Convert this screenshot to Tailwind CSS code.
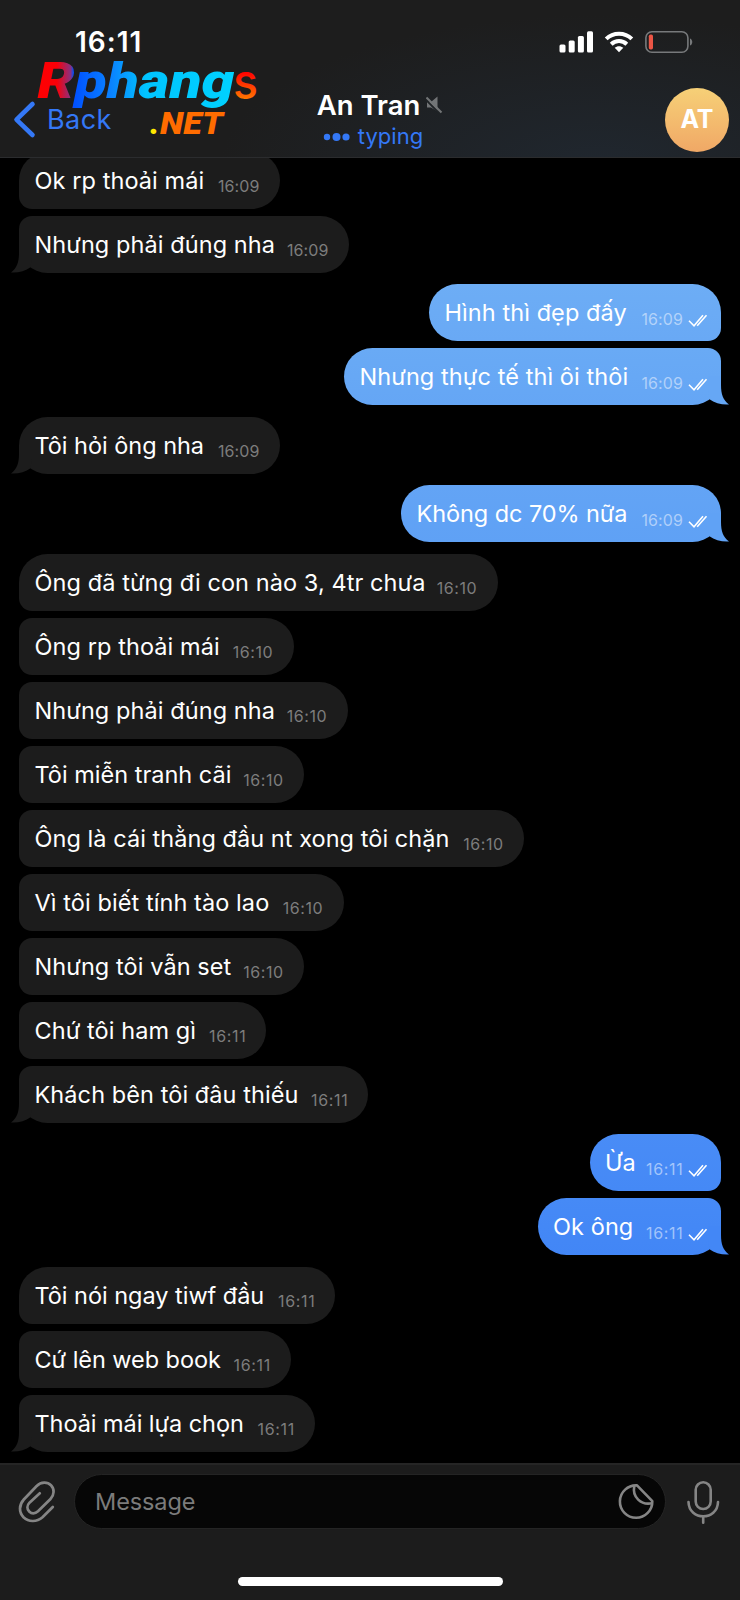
<!DOCTYPE html>
<html lang="vi">
<head>
<meta charset="utf-8">
<title>An Tran</title>
<script src="https://cdn.jsdelivr.net/npm/@tailwindcss/browser@4"></script>
</head>
<body class="bg-black">
<svg class="hidden">
  <symbol id="tail-in" viewBox="0 0 21 29"><path d="M8 0V9C8 18 6 24 0 28.500C7 29 14.500 27 19.500 23.200L21 14V0Z"/></symbol>
  <symbol id="tail-out" viewBox="0 0 21 29"><path d="M13 0V9C13 18 15 24 21 28.500C14 29 6.500 27 1.500 23.200L0 14V0Z"/></symbol>
  <symbol id="ticks" viewBox="0 0 20 14"><path d="M1 6.700L6 11.700L15 1.200M9.200 11.700L18.500 1.200" fill="none" stroke="#fff" stroke-width="1.600"/></symbol>
</svg>
<div class="relative flex h-[1600px] w-[740px] flex-col overflow-hidden bg-black font-['Inter','Noto_Sans',sans-serif] text-white">

  <!-- Header -->
  <header class="relative z-10 flex h-[158px] shrink-0 flex-col border-b border-[#2b2c2e] bg-[#1d1d1d] bg-[radial-gradient(ellipse_380px_150px_at_600px_165px,#20272f,#1d1d1d00)]">
    <div class="flex h-[84px] shrink-0 items-center justify-between pl-[75px] pr-[47px]">
      <div class="text-[28px] leading-[34px] font-semibold tracking-[1px]">16:11</div>
      <div class="flex items-center gap-[11px]">
        <svg class="h-[22px] w-[34px]" viewBox="0 0 34 22" fill="#fff"><rect x="0.500" y="13.500" width="6" height="8" rx="1.500"/><rect x="9.700" y="9.500" width="6" height="12" rx="1.500"/><rect x="18.900" y="5" width="6" height="16.500" rx="1.500"/><rect x="28" y="0.300" width="6" height="21.200" rx="1.500"/></svg>
        <svg class="h-[22px] w-[30px]" viewBox="0 0 30 22" fill="none" stroke="#fff" stroke-width="4"><path d="M2.200 7.800C9.200 0.900 20.800 0.900 27.800 7.800"/><path d="M7.200 13.200C11.600 9 18.400 9 22.800 13.200"/><path d="M10.700 16.800C13.100 14.700 16.900 14.700 19.300 16.800L15 21.200Z" fill="#fff" stroke="none"/></svg>
        <svg class="h-[22px] w-[48px]" viewBox="0 0 48 22"><rect x="0.900" y="0.800" width="42" height="20.400" rx="6" fill="none" stroke="#77797b" stroke-width="1.600"/><rect x="3.800" y="3.500" width="4.200" height="15" rx="1.700" fill="#eb5545"/><path d="M45 7.500C48 8.500 48 13.500 45 14.500Z" fill="#77797b"/></svg>
      </div>
    </div>
    <div class="grid h-[73px] grid-cols-[240px_1fr_240px]">
      <div class="flex items-start gap-[11px] pl-[13px] pt-[15px]">
        <svg class="mt-[1px] h-[40px] w-[23px]" viewBox="0 0 23 40" fill="none" stroke="#3478f6" stroke-width="4.600" stroke-linecap="round" stroke-linejoin="round"><path d="M19.500 4L3.500 19.700L19.500 35"/></svg>
        <span class="mt-[4px] text-[27px] leading-[34px] tracking-[0.4px] text-[#3478f6]">Back</span>
      </div>
      <div class="flex flex-col items-center pt-[4px]">
        <div class="flex items-center gap-[6px] pl-[20px]">
          <span class="text-[27.500px] leading-[34px] font-semibold whitespace-nowrap">An Tran</span>
          <svg class="h-[18px] w-[17px]" viewBox="0 0 17 18"><path d="M1 6H5L11.500 0.500V15.500L5 11.500H1Z" fill="#737577"/><path d="M-1 0.500L15 16.500" stroke="#1f2326" stroke-width="2" transform="translate(0 2.400)"/><path d="M0.500 1.500L15.500 16.500" stroke="#737577" stroke-width="2"/></svg>
        </div>
        <div class="-mt-[1px] flex items-center gap-[8px] pl-[6px]">
          <svg class="mt-[1px] h-[10px] w-[27px]" viewBox="0 0 27 10" fill="#3478f6"><circle cx="4" cy="5" r="3.200"/><circle cx="13.500" cy="5" r="4"/><circle cx="23" cy="5" r="3.600"/></svg>
          <span class="text-[22px] leading-[30px] text-[#3478f6]">typing</span>
        </div>
      </div>
      <div class="flex items-start justify-end pr-[11px] pt-[4px]">
        <div class="flex h-[64px] w-[64px] items-center justify-center rounded-full bg-linear-to-b from-[#f6d077] to-[#f0a866] text-[25px] font-bold">AT</div>
      </div>
    </div>
    <!-- Logo badge over the header -->
    <svg class="absolute left-[30px] top-[50px] h-[95px] w-[240px]" viewBox="30 50 240 95">
      <defs>
        <linearGradient id="g1" gradientUnits="userSpaceOnUse" x1="37" y1="0" x2="235" y2="0"><stop offset="0" stop-color="#f00"/><stop offset=".1" stop-color="#fa0008"/><stop offset=".17" stop-color="#8a3080"/><stop offset=".185" stop-color="#0050ff"/><stop offset=".38" stop-color="#0a84ff"/><stop offset=".55" stop-color="#00c4ff"/><stop offset="1" stop-color="#00d2ff"/></linearGradient>
        <linearGradient id="g2" gradientUnits="userSpaceOnUse" x1="0" y1="72" x2="0" y2="100"><stop offset="0" stop-color="#f00"/><stop offset="1" stop-color="#ff7b00"/></linearGradient>
      </defs>
      <g font-family="Roboto, sans-serif" font-weight="900" font-style="italic">
        <text x="37.500" y="98" font-size="49.500" textLength="197" lengthAdjust="spacingAndGlyphs" fill="url(#g1)">Rphang</text>
        <text x="150" y="134" font-size="32" fill="#ffe800">.</text>
        <text x="160" y="134" font-size="32" textLength="63" lengthAdjust="spacingAndGlyphs" fill="#ff6c00">NET</text>
      </g>
      <text x="233" y="99" font-family="Inter, sans-serif" font-weight="500" font-size="49" textLength="25" lengthAdjust="spacingAndGlyphs" fill="url(#g2)">s</text>
    </svg>
  </header>

  <!-- Conversation -->
  <main class="-mt-[6.500px] flex min-h-0 flex-1 flex-col gap-[11.500px] pl-[19px] pr-[19px] text-[23.500px] leading-[57px] tracking-[0.08px] whitespace-nowrap">
    <section class="flex flex-col items-start gap-[7px]">
      <div class="flex h-[57px] w-[261px] justify-between rounded-[28.500px] rounded-bl-[13px] bg-[#1c1c1c] pl-[15.500px] pr-[20.500px]"><span>Ok rp thoải mái</span><span class="pt-[6.500px] text-[16px] text-[#7d7d7d]">16:09</span></div>
      <div class="relative flex h-[57px] w-[330px] justify-between rounded-[28.500px] rounded-tl-[13px] bg-[#1c1c1c] pl-[15.500px] pr-[20.500px]"><svg class="absolute -left-[8px] bottom-0 h-[29px] w-[21px] fill-[#1c1c1c]"><use href="#tail-in"/></svg><span>Nhưng phải đúng nha</span><span class="pt-[6.500px] text-[16px] text-[#7d7d7d]">16:09</span></div>
    </section>
    <section class="flex flex-col items-end gap-[7px]">
      <div class="flex h-[57px] w-[292px] rounded-[28.500px] rounded-br-[13px] bg-linear-to-b from-[#6dadf5] to-[#69a9f5] pl-[15.500px] pr-[13px]"><span class="flex-1">Hình thì đẹp đấy</span><span class="pt-[6.500px] text-[16px] text-[#b3d3fa]">16:09</span><svg class="ml-[5px] mt-[29.500px] h-[14px] w-[20px]"><use href="#ticks"/></svg></div>
      <div class="relative flex h-[57px] w-[377px] rounded-[28.500px] rounded-tr-[13px] bg-linear-to-b from-[#69aaf5] to-[#65a6f5] pl-[15.500px] pr-[13px]"><svg class="absolute -right-[8px] bottom-0 h-[29px] w-[21px] fill-[#66a7f5]"><use href="#tail-out"/></svg><span class="flex-1">Nhưng thực tế thì ôi thôi</span><span class="pt-[6.500px] text-[16px] text-[#b1d1fa]">16:09</span><svg class="relative ml-[5px] mt-[29.500px] h-[14px] w-[20px]"><use href="#ticks"/></svg></div>
    </section>
    <section class="flex flex-col items-start">
      <div class="relative flex h-[57px] w-[261px] justify-between rounded-[28.500px] bg-[#1c1c1c] pl-[15.500px] pr-[20.500px]"><svg class="absolute -left-[8px] bottom-0 h-[29px] w-[21px] fill-[#1c1c1c]"><use href="#tail-in"/></svg><span class="tracking-[-0.03px]">Tôi hỏi ông nha</span><span class="pt-[6.500px] text-[16px] text-[#7d7d7d]">16:09</span></div>
    </section>
    <section class="flex flex-col items-end">
      <div class="relative flex h-[57px] w-[320px] rounded-[28.500px] bg-linear-to-b from-[#63a4f5] to-[#5fa1f5] pl-[15.500px] pr-[13px]"><svg class="absolute -right-[8px] bottom-0 h-[29px] w-[21px] fill-[#60a2f5]"><use href="#tail-out"/></svg><span class="flex-1 tracking-[-0.08px]">Không dc 70% nữa</span><span class="pt-[6.500px] text-[16px] text-[#afcffa]">16:09</span><svg class="relative ml-[5px] mt-[29.500px] h-[14px] w-[20px]"><use href="#ticks"/></svg></div>
    </section>
    <section class="flex flex-col items-start gap-[7px]">
      <div class="flex h-[57px] w-[478.500px] justify-between rounded-[28.500px] rounded-bl-[13px] bg-[#1c1c1c] pl-[15.500px] pr-[20.500px]"><span>Ông đã từng đi con nào 3, 4tr chưa</span><span class="pt-[6.500px] text-[16px] tracking-[0.5px] text-[#7d7d7d]">16:10</span></div>
      <div class="flex h-[57px] w-[274.500px] justify-between rounded-[28.500px] rounded-l-[13px] bg-[#1c1c1c] pl-[15.500px] pr-[20.500px]"><span>Ông rp thoải mái</span><span class="pt-[6.500px] text-[16px] tracking-[0.5px] text-[#7d7d7d]">16:10</span></div>
      <div class="flex h-[57px] w-[328.500px] justify-between rounded-[28.500px] rounded-l-[13px] bg-[#1c1c1c] pl-[15.500px] pr-[20.500px]"><span>Nhưng phải đúng nha</span><span class="pt-[6.500px] text-[16px] tracking-[0.5px] text-[#7d7d7d]">16:10</span></div>
      <div class="flex h-[57px] w-[285px] justify-between rounded-[28.500px] rounded-l-[13px] bg-[#1c1c1c] pl-[15.500px] pr-[20.500px]"><span class="tracking-[0px]">Tôi miễn tranh cãi</span><span class="pt-[6.500px] text-[16px] tracking-[0.5px] text-[#7d7d7d]">16:10</span></div>
      <div class="flex h-[57px] w-[505px] justify-between rounded-[28.500px] rounded-l-[13px] bg-[#1c1c1c] pl-[15.500px] pr-[20.500px]"><span class="tracking-[0.05px]">Ông là cái thằng đầu nt xong tôi chặn</span><span class="pt-[6.500px] text-[16px] tracking-[0.5px] text-[#7d7d7d]">16:10</span></div>
      <div class="flex h-[57px] w-[324.500px] justify-between rounded-[28.500px] rounded-l-[13px] bg-[#1c1c1c] pl-[15.500px] pr-[20.500px]"><span>Vì tôi biết tính tào lao</span><span class="pt-[6.500px] text-[16px] tracking-[0.5px] text-[#7d7d7d]">16:10</span></div>
      <div class="flex h-[57px] w-[285px] justify-between rounded-[28.500px] rounded-l-[13px] bg-[#1c1c1c] pl-[15.500px] pr-[20.500px]"><span>Nhưng tôi vẫn set</span><span class="pt-[6.500px] text-[16px] tracking-[0.5px] text-[#7d7d7d]">16:10</span></div>
      <div class="flex h-[57px] w-[247px] justify-between rounded-[28.500px] rounded-l-[13px] bg-[#1c1c1c] pl-[15.500px] pr-[19.500px]"><span>Chứ tôi ham gì</span><span class="pt-[6.500px] text-[16px] tracking-[0.7px] text-[#7d7d7d]">16:11</span></div>
      <div class="relative flex h-[57px] w-[349px] justify-between rounded-[28.500px] rounded-tl-[13px] bg-[#1c1c1c] pl-[15.500px] pr-[19.500px]"><svg class="absolute -left-[8px] bottom-0 h-[29px] w-[21px] fill-[#1c1c1c]"><use href="#tail-in"/></svg><span>Khách bên tôi đâu thiếu</span><span class="pt-[6.500px] text-[16px] tracking-[0.7px] text-[#7d7d7d]">16:11</span></div>
    </section>
    <section class="flex flex-col items-end gap-[7px]">
      <div class="flex h-[57px] w-[131.500px] rounded-[28.500px] rounded-br-[13px] bg-linear-to-b from-[#498cf6] to-[#4589f6] pl-[15.500px] pr-[13px]"><span class="flex-1">Ừa</span><span class="pt-[6.500px] text-[16px] tracking-[0.7px] text-[#a3c5fb]">16:11</span><svg class="ml-[4.500px] mt-[29.500px] h-[14px] w-[20px]"><use href="#ticks"/></svg></div>
      <div class="relative flex h-[57px] w-[183.500px] rounded-[28.500px] rounded-tr-[13px] bg-linear-to-b from-[#468af6] to-[#4286f6] pl-[15.500px] pr-[13px]"><svg class="absolute -right-[8px] bottom-0 h-[29px] w-[21px] fill-[#4387f6]"><use href="#tail-out"/></svg><span class="flex-1">Ok ông</span><span class="pt-[6.500px] text-[16px] tracking-[0.7px] text-[#a1c3fb]">16:11</span><svg class="relative ml-[4.500px] mt-[29.500px] h-[14px] w-[20px]"><use href="#ticks"/></svg></div>
    </section>
    <section class="flex flex-col items-start gap-[7px]">
      <div class="flex h-[57px] w-[316px] justify-between rounded-[28.500px] rounded-bl-[13px] bg-[#1c1c1c] pl-[15.500px] pr-[19.500px]"><span class="tracking-[-0.03px]">Tôi nói ngay tiwf đầu</span><span class="pt-[6.500px] text-[16px] tracking-[0.7px] text-[#7d7d7d]">16:11</span></div>
      <div class="flex h-[57px] w-[271.500px] justify-between rounded-[28.500px] rounded-l-[13px] bg-[#1c1c1c] pl-[15.500px] pr-[19.500px]"><span class="tracking-[-0.06px]">Cứ lên web book</span><span class="pt-[6.500px] text-[16px] tracking-[0.7px] text-[#7d7d7d]">16:11</span></div>
      <div class="relative flex h-[57px] w-[295.500px] justify-between rounded-[28.500px] rounded-tl-[13px] bg-[#1c1c1c] pl-[15.500px] pr-[19.500px]"><svg class="absolute -left-[8px] bottom-0 h-[29px] w-[21px] fill-[#1c1c1c]"><use href="#tail-in"/></svg><span class="tracking-[-0.06px]">Thoải mái lựa chọn</span><span class="pt-[6.500px] text-[16px] tracking-[0.7px] text-[#7d7d7d]">16:11</span></div>
    </section>
  </main>

  <!-- Composer -->
  <footer class="flex h-[137px] shrink-0 flex-col justify-between border-t-2 border-[#252525] bg-[#1c1c1c] pb-[14px] pt-[9px]">
    <div class="flex items-center pl-[17px]">
      <svg class="h-[44px] w-[40px] shrink-0" viewBox="17 1480 40 44" fill="none" stroke="#858585" stroke-width="2.700" stroke-linecap="round"><path d="M52.800 1507L42.500 1517.200C36.500 1522.500 28.500 1522 23.500 1517.200C18.700 1512.200 18.900 1505 23.800 1499.500L36.700 1486C41 1481.500 47.500 1481.700 51 1485.300C54.600 1489 54.400 1495 50.500 1499L38 1511.300C35 1514 31.500 1513.800 29.200 1511.500C26.700 1509 26.900 1505.500 29.500 1502.700L39.800 1493.300"/></svg>
      <div class="ml-[17px] flex h-[55px] w-[592px] shrink-0 items-center justify-between rounded-full border border-[#242424] bg-[#060606] pl-[20px] pr-[10px]">
        <span class="text-[23.500px] text-[#7b7b7b] -tracking-[0.1px]">Message</span>
        <svg class="h-[38px] w-[38px]" viewBox="617 1483 38 38" fill="none" stroke="#858585" stroke-width="2.600" stroke-linejoin="round"><path d="M637 1485.400A16.200 16.200 0 1 0 652.300 1501.200Z"/><path d="M634.300 1486C632 1497 641 1505.500 652 1503.200"/></svg>
      </div>
      <svg class="ml-[19px] h-[44px] w-[36px] shrink-0" viewBox="685 1480 36 44" fill="none" stroke="#858585" stroke-width="2.600" stroke-linecap="round"><rect x="695.700" y="1482.300" width="15" height="26.700" rx="7.500"/><path d="M688.500 1502C689 1521 717.500 1521 718 1502M703.200 1517V1522.700"/></svg>
    </div>
    <div class="mx-auto h-[9px] w-[265px] rounded-full bg-white"></div>
  </footer>
</div>
</body>
</html>
